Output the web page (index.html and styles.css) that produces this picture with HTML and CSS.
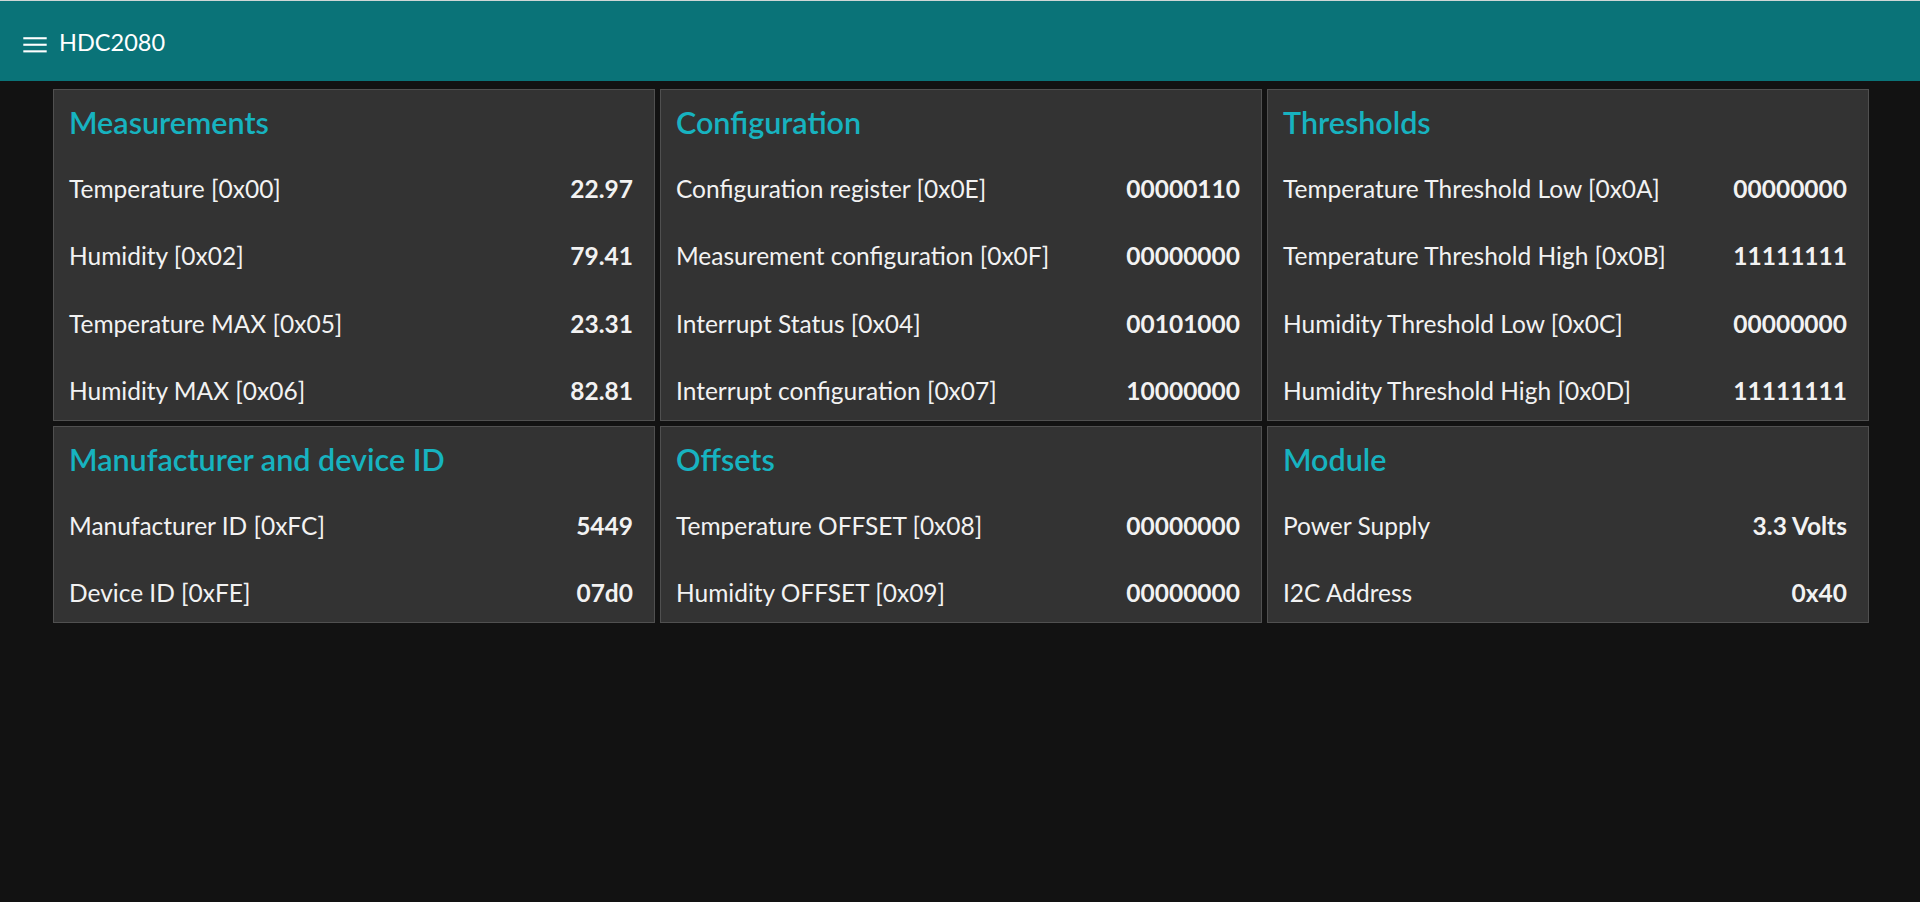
FILE: index.html
```html
<!DOCTYPE html>
<html lang="en">
<head>
<meta charset="utf-8">
<title>HDC2080</title>
<link rel="stylesheet" href="styles.css">
</head>
<body>
<header class="topbar">
  <svg class="menu-icon" width="24" height="16" viewBox="0 0 24 16" aria-hidden="true">
    <rect x="0.3" y="0.2" width="23.4" height="2.1" fill="#fff"/>
    <rect x="0.3" y="6.7" width="23.4" height="2.1" fill="#fff"/>
    <rect x="0.3" y="13.3" width="23.4" height="2.1" fill="#fff"/>
  </svg>
  <span class="brand">HDC2080</span>
</header>
<main class="grid">
  <section class="card">
    <h2 class="card-title">Measurements</h2>
    <div class="row"><span class="label">Temperature [0x00]</span><span class="value">22.97</span></div>
    <div class="row"><span class="label">Humidity [0x02]</span><span class="value">79.41</span></div>
    <div class="row"><span class="label">Temperature MAX [0x05]</span><span class="value">23.31</span></div>
    <div class="row"><span class="label">Humidity MAX [0x06]</span><span class="value">82.81</span></div>
  </section>
  <section class="card">
    <h2 class="card-title">Configuration</h2>
    <div class="row"><span class="label">Configuration register [0x0E]</span><span class="value">00000110</span></div>
    <div class="row"><span class="label">Measurement configuration [0x0F]</span><span class="value">00000000</span></div>
    <div class="row"><span class="label">Interrupt Status [0x04]</span><span class="value">00101000</span></div>
    <div class="row"><span class="label">Interrupt configuration [0x07]</span><span class="value">10000000</span></div>
  </section>
  <section class="card">
    <h2 class="card-title">Thresholds</h2>
    <div class="row"><span class="label">Temperature Threshold Low [0x0A]</span><span class="value">00000000</span></div>
    <div class="row"><span class="label">Temperature Threshold High [0x0B]</span><span class="value">11111111</span></div>
    <div class="row"><span class="label">Humidity Threshold Low [0x0C]</span><span class="value">00000000</span></div>
    <div class="row"><span class="label">Humidity Threshold High [0x0D]</span><span class="value">11111111</span></div>
  </section>
  <section class="card">
    <h2 class="card-title">Manufacturer and device ID</h2>
    <div class="row"><span class="label">Manufacturer ID [0xFC]</span><span class="value">5449</span></div>
    <div class="row"><span class="label">Device ID [0xFE]</span><span class="value">07d0</span></div>
  </section>
  <section class="card">
    <h2 class="card-title">Offsets</h2>
    <div class="row"><span class="label">Temperature OFFSET [0x08]</span><span class="value">00000000</span></div>
    <div class="row"><span class="label">Humidity OFFSET [0x09]</span><span class="value">00000000</span></div>
  </section>
  <section class="card">
    <h2 class="card-title">Module</h2>
    <div class="row"><span class="label">Power Supply</span><span class="value">3.3 Volts</span></div>
    <div class="row"><span class="label">I2C Address</span><span class="value">0x40</span></div>
  </section>
</main>
</body>
</html>
```

FILE: styles.css
```css
* { box-sizing: border-box; }

html, body {
  margin: 0;
  padding: 0;
  background: #121212;
  color: #f2f2f2;
  font-family: "Lato", "Open Sans", sans-serif;
}

.topbar {
  height: 81px;
  background: #0a7378;
  border-top: 1px solid #cfd6d6;
  padding: 1px 0 0 23px;
  display: flex;
  align-items: center;
  color: #ffffff;
}

.menu-icon {
  display: block;
  flex: none;
  margin-top: 6px;
}

.brand {
  margin-left: 12px;
  font-size: 23.5px;
  line-height: 30px;
  font-weight: 400;
}

.grid {
  display: grid;
  grid-template-columns: repeat(3, 1fr);
  align-items: start;
  gap: 5px;
  padding: 8px 51px 0 53px;
}

.card {
  background: #333333;
  border: 1px solid #505050;
  padding: 0 21px 0 15px;
}

.card-title {
  margin: 0;
  padding: 14px 0 10px;
  font-size: 30.5px;
  line-height: 36px;
  font-weight: 600;
  color: #17b3c0;
}

.row {
  height: 67.5px;
  padding-top: 10px;
  display: flex;
  align-items: center;
  justify-content: space-between;
  font-size: 24.5px;
  line-height: 30px;
}

.label {
  font-weight: 400;
}

.value {
  font-weight: 700;
}
```
